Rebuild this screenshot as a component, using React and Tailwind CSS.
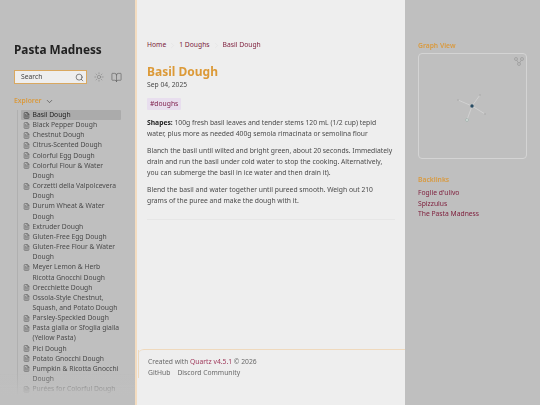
import { Search, Sun, BookOpen, ChevronDown, ChevronRight, FileText } from 'lucide-react'

const explorerItems = [
  'Basil Dough',
  'Black Pepper Dough',
  'Chestnut Dough',
  'Citrus-Scented Dough',
  'Colorful Egg Dough',
  'Colorful Flour & Water Dough',
  'Corzetti della Valpolcevera Dough',
  'Durum Wheat & Water Dough',
  'Extruder Dough',
  'Gluten-Free Egg Dough',
  'Gluten-Free Flour & Water Dough',
  'Meyer Lemon & Herb Ricotta Gnocchi Dough',
  'Orecchiette Dough',
  'Ossola-Style Chestnut, Squash, and Potato Dough',
  'Parsley-Speckled Dough',
  'Pasta gialla or Sfoglia gialla (Yellow Pasta)',
  'Pici Dough',
  'Potato Gnocchi Dough',
  'Pumpkin & Ricotta Gnocchi Dough',
  'Purées for Colorful Dough',
]

function ExplorerRow({ title, active }) {
  return (
    <li className={`flex pl-[2px] rounded-[1px] ${active ? 'bg-[#ababab] text-[#222]' : 'text-[#4a4a4a]'}`}>
      <FileText className="w-[7px] h-[7px] mt-[1.5px] shrink-0" strokeWidth={1.75} />
      <span className="ml-[2.5px]">{title}</span>
    </li>
  )
}

function Crumb({ children }) {
  return <span className="text-[#7d1c3a]">{children}</span>
}

function Sidebar() {
  return (
    <aside className="w-[135px] shrink-0 h-full overflow-hidden pl-[14px] pt-[40px] relative">
      <h1 className="text-[11.8px] leading-[18px] font-bold text-[#222]">Pasta Madness</h1>
      <div className="flex items-center mt-[12px]">
        <div className="w-[73px] h-[14px] bg-[#eeeeee] border border-[#d9a860] flex items-center justify-between pl-[6px] pr-[2px]">
          <span className="text-[6.75px] text-[#444]">Search</span>
          <Search className="w-[9px] h-[9px] text-[#333]" strokeWidth={1.5} />
        </div>
        <Sun className="w-[10px] h-[10px] ml-[7px] text-[#777]" strokeWidth={1.25} />
        <BookOpen className="w-[11px] h-[11px] ml-[7px] text-[#555]" strokeWidth={1.25} />
      </div>
      <div className="flex items-center mt-[12px] text-[6.75px] leading-[10px] font-semibold text-[#d99a3f]">
        Explorer
        <ChevronDown className="w-[9px] h-[9px] ml-[3px] text-[#333]" strokeWidth={1.5} />
      </div>
      <ul className="mt-[4px] ml-[3px] w-[104px] border-l border-[#b0b0b0] pl-[3px] text-[6.75px] leading-[10.15px]">
        {explorerItems.map((title, i) => (
          <ExplorerRow key={title} title={title} active={i === 0} />
        ))}
      </ul>
      <div className="absolute left-0 right-0 top-[372px] h-[24px] bg-gradient-to-b from-transparent to-[#bfbfbf]" />
      <div className="absolute left-0 right-0 top-[396px] h-[9px] bg-[#bfbfbf]" />
    </aside>
  )
}

function Article() {
  return (
    <main className="w-[270px] shrink-0 h-full bg-[#eeeeee] border-l-2 border-[#f3dcc0] flex flex-col">
      <div className="pl-[10px] pr-[10px] pt-[40px] flex-1">
        <nav className="flex items-center text-[6.75px] leading-[10px]">
          <Crumb>Home</Crumb>
          <ChevronRight className="w-[9px] h-[9px] mx-[2px] text-[#dcdcdc]" strokeWidth={1} />
          <Crumb>1 Doughs</Crumb>
          <ChevronRight className="w-[9px] h-[9px] mx-[2px] text-[#dcdcdc]" strokeWidth={1} />
          <Crumb>Basil Dough</Crumb>
        </nav>
        <h2 className="mt-[13px] text-[12px] leading-[17px] font-bold text-[#dc9a38]">Basil Dough</h2>
        <div className="text-[6.75px] leading-[10px] text-[#4a4a4a]">Sep 04, 2025</div>
        <span className="inline-block mt-[8px] px-[3px] h-[12px] leading-[12px] rounded-[1px] bg-[#e8deee] text-[6.75px] text-[#7d1c4a] align-top">#doughs</span>
        <div className="mt-[3px] pr-[2px] text-[6.75px] leading-[11px] text-[#4a4a4a] space-y-[6px]">
          <p>
            <strong className="text-[#222]">Shapes:</strong> 100g fresh basil leaves and tender stems 120 mL (1/2 cup) tepid water, plus more as needed 400g semola rimacinata or semolina flour
          </p>
          <p>Blanch the basil until wilted and bright green, about 20 seconds. Immediately drain and run the basil under cold water to stop the cooking. Alternatively, you can submerge the basil in ice water and then drain it).</p>
          <p>Blend the basil and water together until pureed smooth. Weigh out 210 grams of the puree and make the dough with it.</p>
        </div>
        <div className="mt-[13px] h-px bg-[#e6e6e6]" />
      </div>
      <footer className="h-[56px] ml-px border-t border-[#efd9bd] rounded-tl-md pl-[10px] pt-[6px] text-[6.75px] leading-[11px] text-[#6a6a6a] relative">
        <div className="absolute left-0 top-0 w-px h-[28px] bg-[#efd9bd]" />
        <div>Created with <span className="text-[#a03a5c]">Quartz v4.5.1</span> © 2026</div>
        <div className="flex gap-[7px]">
          <span>GitHub</span>
          <span>Discord Community</span>
        </div>
      </footer>
    </main>
  )
}

function GraphView() {
  return (
    <div className="mt-[2px] w-[109px] h-[106px] border border-[#d4d4d4] rounded-sm">
      <svg className="w-full h-full" viewBox="0 0 107 104">
        <g stroke="#d8d8d8" strokeWidth="0.7">
          <line x1="53" y1="52" x2="39" y2="46" />
          <line x1="53" y1="52" x2="61" y2="41" />
          <line x1="53" y1="52" x2="66" y2="60" />
          <line x1="53" y1="52" x2="48" y2="66" />
        </g>
        <circle cx="39" cy="46" r="1" fill="#b0b0b0" />
        <circle cx="61" cy="41" r="1" fill="#b0b0b0" />
        <circle cx="66" cy="60" r="1" fill="#b0b0b0" />
        <circle cx="48" cy="66" r="1.3" fill="#eeeeee" stroke="#7a9a90" strokeWidth="0.5" />
        <circle cx="53" cy="52" r="1.7" fill="#284b63" />
        <g fill="none" stroke="#9a9a9a" strokeWidth="0.7">
          <circle cx="97" cy="5" r="1.5" />
          <circle cx="103" cy="5" r="1.5" />
          <circle cx="100" cy="10" r="1.5" />
          <line x1="97.8" y1="6.3" x2="99.2" y2="8.7" />
          <line x1="102.2" y1="6.3" x2="100.8" y2="8.7" />
        </g>
      </svg>
    </div>
  )
}

function RightBar() {
  return (
    <aside className="flex-1 h-full pl-[13px] pt-[41px]">
      <h3 className="text-[6.75px] leading-[10px] font-semibold text-[#d99a3f]">Graph View</h3>
      <GraphView />
      <h3 className="mt-[16px] text-[6.75px] leading-[10px] font-semibold text-[#d99a3f]">Backlinks</h3>
      <ul className="mt-[3px] text-[6.75px] leading-[10.5px] text-[#7d1c3a]">
        <li>Foglie d'ulivo</li>
        <li>Spizzulus</li>
        <li>The Pasta Madness</li>
      </ul>
    </aside>
  )
}

export default function App() {
  return (
    <div className="w-[540px] h-[405px] bg-[#bfbfbf] overflow-hidden">
      <div className="w-full h-full flex blur-[0.3px] font-['Noto_Sans',sans-serif]">
        <Sidebar />
        <Article />
        <RightBar />
      </div>
    </div>
  )
}
